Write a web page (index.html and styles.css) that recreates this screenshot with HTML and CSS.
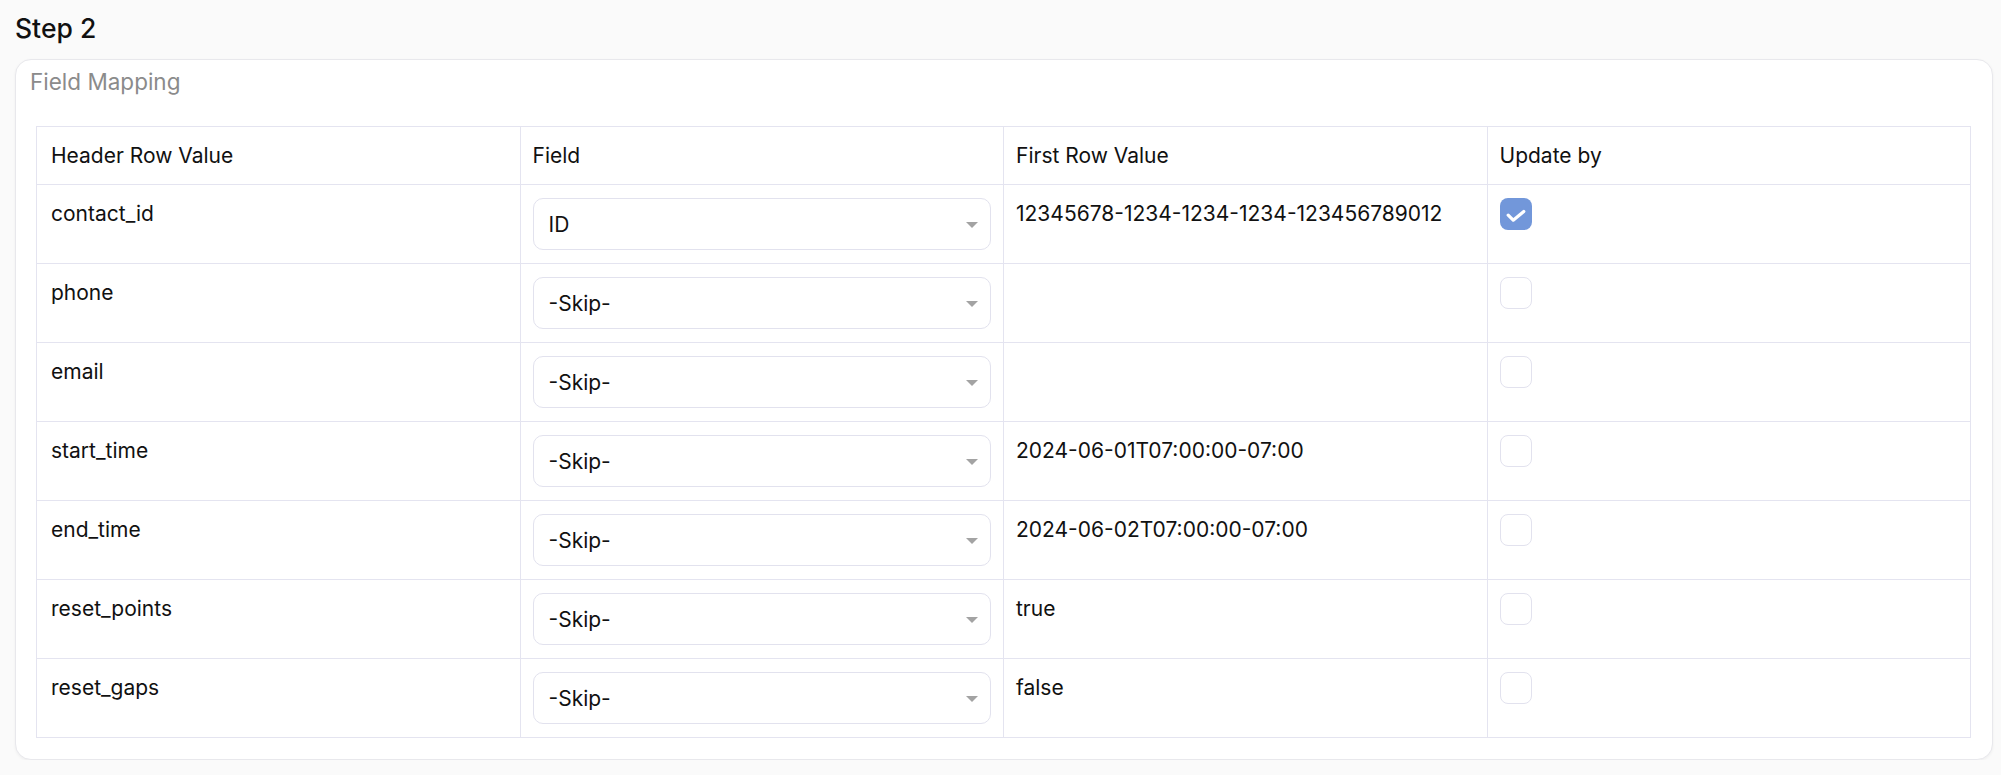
FILE: index.html
```html
<!DOCTYPE html>
<html>

<head>
    <meta charset="utf-8">
    <title>Import - Step 2</title>
    <link rel="stylesheet" href="styles.css">
</head>

<body>
    <h2 class="step-title">Step 2</h2>
    <div class="card">
        <div class="card-title">Field Mapping</div>
        <table class="map-table">
            <thead>
                <tr>
                    <th>Header Row Value</th>
                    <th>Field</th>
                    <th>First Row Value</th>
                    <th>Update by</th>
                </tr>
            </thead>
            <tbody>
                <tr>
                    <td>contact_id</td>
                    <td><div class="dropdown"><span>ID</span></div></td>
                    <td>12345678-1234-1234-1234-123456789012</td>
                    <td>
                        <span class="check checked">
                            <svg width="32" height="32" viewBox="0 0 32 32"><path d="M8.2 17.2 L13.2 22.2 L23.8 13.4" fill="none" stroke="#fff" stroke-width="3.2" stroke-linecap="round" stroke-linejoin="round"/></svg>
                        </span>
                    </td>
                </tr>
                <tr>
                    <td>phone</td>
                    <td><div class="dropdown"><span>-Skip-</span></div></td>
                    <td></td>
                    <td><span class="check"></span></td>
                </tr>
                <tr>
                    <td>email</td>
                    <td><div class="dropdown"><span>-Skip-</span></div></td>
                    <td></td>
                    <td><span class="check"></span></td>
                </tr>
                <tr>
                    <td>start_time</td>
                    <td><div class="dropdown"><span>-Skip-</span></div></td>
                    <td>2024-06-01T07:00:00-07:00</td>
                    <td><span class="check"></span></td>
                </tr>
                <tr>
                    <td>end_time</td>
                    <td><div class="dropdown"><span>-Skip-</span></div></td>
                    <td>2024-06-02T07:00:00-07:00</td>
                    <td><span class="check"></span></td>
                </tr>
                <tr>
                    <td>reset_points</td>
                    <td><div class="dropdown"><span>-Skip-</span></div></td>
                    <td>true</td>
                    <td><span class="check"></span></td>
                </tr>
                <tr>
                    <td>reset_gaps</td>
                    <td><div class="dropdown"><span>-Skip-</span></div></td>
                    <td>false</td>
                    <td><span class="check"></span></td>
                </tr>
            </tbody>
        </table>
    </div>
</body>

</html>
```

FILE: styles.css
```css
body {
    margin: 0;
    padding: 0 8px 0 15px;
    background-color: #fafafa;
    font-family: Inter, "Noto Sans", sans-serif;
    color: #111;
}

.step-title {
    margin: 13px 0 16px 0;
    font-size: 26.5px;
    font-weight: 500;
    line-height: 30px;
}

.card {
    background-color: #fff;
    border: 1px solid #e8e8ec;
    border-radius: 16px;
    padding: 0 21px 21px 20px;
    box-shadow: 0 1px 3px rgba(0, 0, 0, 0.05);
}

.card-title {
    padding: 8px 0 0 0;
    margin-left: -6px;
    font-size: 22.5px;
    line-height: 28px;
    color: #8b8b8b;
    margin-bottom: 30px;
}

.map-table {
    width: 100%;
    border-collapse: collapse;
    table-layout: fixed;
    font-size: 21px;
}

.map-table th,
.map-table td {
    border: 1px solid #e4e4f0;
    padding: 13px 12px;
    line-height: 31px;
    text-align: left;
    vertical-align: top;
    font-weight: 400;
}

.map-table th:first-child,
.map-table td:first-child {
    padding-left: 14px;
}

.dropdown {
    position: relative;
    height: 52px;
    box-sizing: border-box;
    border: 1px solid #e2e2ee;
    border-radius: 10px;
    padding: 0 15px;
    display: flex;
    align-items: center;
    background-color: #fff;
}

.dropdown::after {
    content: "";
    position: absolute;
    right: 12px;
    top: 50%;
    margin-top: -2px;
    border-left: 6px solid transparent;
    border-right: 6px solid transparent;
    border-top: 6px solid #a3a3a3;
}

.check {
    display: block;
    width: 32px;
    height: 32px;
    box-sizing: border-box;
    border: 1px solid #e2e2ee;
    border-radius: 8px;
    background-color: #fff;
}

.check.checked {
    border: none;
    background-color: #7297da;
}

.check svg {
    display: block;
}
```
